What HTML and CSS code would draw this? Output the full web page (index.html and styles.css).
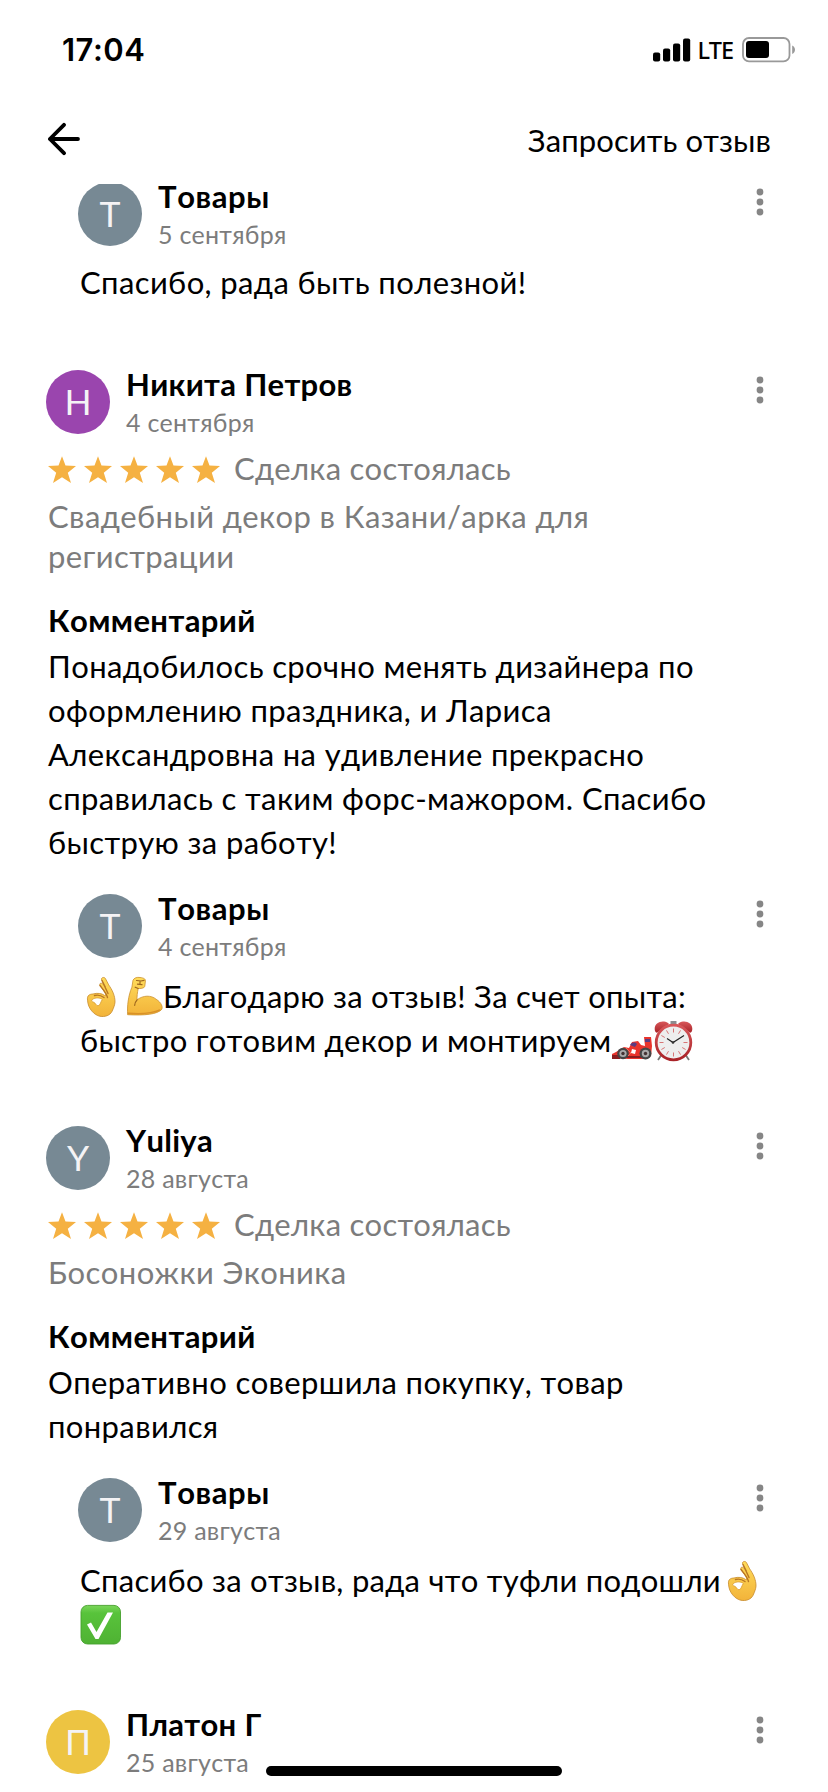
FILE: index.html
```html
<!DOCTYPE html>
<html lang="ru">
<head>
<meta charset="utf-8">
<title>Отзывы</title>
<link rel="stylesheet" href="styles.css">
</head>
<body>
<svg class="defs" width="0" height="0">
  <defs>
    <linearGradient id="skin" x1="0" y1="0" x2="0" y2="1"><stop offset="0" stop-color="#ffdc5a"/><stop offset="1" stop-color="#f2b33a"/></linearGradient>
    <linearGradient id="green" x1="0" y1="0" x2="0" y2="1"><stop offset="0" stop-color="#7ad65a"/><stop offset=".2" stop-color="#58c33b"/><stop offset="1" stop-color="#4fb233"/></linearGradient>
    <linearGradient id="red" x1="0" y1="0" x2="0" y2="1"><stop offset="0" stop-color="#d8575a"/><stop offset="1" stop-color="#a92328"/></linearGradient>
    <symbol id="dots" viewBox="0 0 8 28"><g fill="#868686"><circle cx="4" cy="4" r="3.4"/><circle cx="4" cy="14" r="3.4"/><circle cx="4" cy="24" r="3.4"/></g></symbol>
    <symbol id="star" viewBox="0 0 28 28"><path fill="#f5b142" d="M14 .3 17.500 9.600 28 10 19.800 16.800 23 27 14 21.300 5 27 8.200 16.800 0 10 10.500 9.600Z"/></symbol>
    <symbol id="ok" viewBox="0 0 41 42">
      <path d="M21.500 3.500c-.6-2 3-3 4-.8l3.200 6.200c3.500 5 6.500 11 6.300 17.300-.3 3-1.300 5.500-3 9.200-2 4-7 5.800-12 4.900-6-1.200-12-8-12.400-15.500-1-6 2.400-6.600 5.400-6.800 4-1.300 9-.6 11.500 1.400l1.600-.2c-1-3.200-3.700-6.200-5.800-9-1.500-2.400.4-4 2.500-2.300l2.600 2.700Z" fill="url(#skin)" stroke="#c7892a" stroke-width=".8"/>
      <path d="M20 9.500c2.200 3 6.500 7.500 7.500 12M22 4.500l6 13M14.500 19.500c3-.8 6.500-.2 9.500 2" fill="none" stroke="#b87523" stroke-width="1.400" stroke-linecap="round"/>
      <path d="M12.500 23.400c2.500-2 8-2 9.800.2-1.600 2-1.800 5.400-4.200 6.200-1.800.2-2-2.300-4.300-3.500-2-.7-2.800-1.500-1.300-2.900Z" fill="#fff" stroke="#d79a30" stroke-width=".8"/>
    </symbol>
    <symbol id="arm" viewBox="0 0 41 42">
      <path d="M11 4.200C12 2 15 .9 18 1.500c3.400.3 5.700 1.400 5.400 3.500l-.6 5.300c-.5 2.300-5 2.300-6.600 2.200-.8 4.200-1.400 8-1.100 11.300 6-4.600 14-4.800 19-.6 5.500 3.400 6.900 8 5.600 10.200-4.500 5-17 6.200-34.100 5.300-.5-8.400.6-19 4.300-27.500Z" fill="url(#skin)" stroke="#cc912d" stroke-width=".8"/>
      <path d="M14.500 4.500 19 5l3-.7M15.500 8.200l4.500.5M18 5v3M15.100 23.800c-1.700 1.700-2.300 3.500-2.400 5.500M16.200 12.500l-3-1.300" fill="none" stroke="#9d651d" stroke-width="1.200" stroke-linecap="round"/>
      <path d="M6 37.200c12 1 25-.1 32-3.300" fill="none" stroke="#d99127" stroke-width="1.500"/>
    </symbol>
    <symbol id="car" viewBox="0 0 41 42">
      <path d="M1 38v-4l4-2 8-5 5 1 3-6 6-1 3 4 4 1-1-9h7l1 9-1 10-5 3H17Z" fill="#e9342c"/>
      <path d="M1 35h8v4H1ZM16 36h18v2H16Z" fill="#8b1d20"/>
      <path d="M19 25c2-3 5-3 7-1l-2 3ZM34 19h5v3h-5Z" fill="#5b3c80"/>
      <path d="m21 29 4 1-1 4-4-1Z" fill="#fff"/>
      <circle cx="12" cy="33.500" r="5.800" fill="#454545"/><circle cx="12" cy="33.500" r="3.600" fill="#aaa"/><circle cx="12" cy="33.500" r="1.700" fill="#433"/>
      <circle cx="34.500" cy="33.500" r="6" fill="#454545"/><circle cx="34.500" cy="33.500" r="3.700" fill="#aaa"/><circle cx="34.500" cy="33.500" r="1.700" fill="#433"/>
      <path d="m15 28 5 5-3 3" fill="none" stroke="#f36a59"/>
    </symbol>
    <symbol id="clock" viewBox="0 0 41 42">
      <path d="m9 34-4 6M32 34l4 6" stroke="#777" stroke-width="1.800"/>
      <path d="M17.500 1h6v4h-6Z" fill="#8b8d90"/>
      <path d="M2 11C0 4 8-1 15 3c2 1 0 2-2 3L5 12c-1 1-2 1-3-1ZM39 11c2-7-6-12-13-8-2 1 0 2 2 3l8 6c1 1 2 1 3-1Z" fill="url(#red)"/>
      <circle cx="20.500" cy="22.500" r="17.300" fill="#eee" stroke="url(#red)" stroke-width="2.800"/>
      <g stroke="#d87575" stroke-width="1"><path d="M20.500 8.500v4M20.500 32.500v4M6.500 22.500h4M30.500 22.500h4M13.500 10.400l2 3.400M25.500 31.200l2 3.400M27.500 10.400l-2 3.400M15.500 31.200l-2 3.400M8.400 15.500l3.400 2M29.200 27.500l3.400 2M8.400 29.500l3.400-2"/></g>
      <path d="m14 18.500 6 4L31 15.500" fill="none" stroke="#222" stroke-width="1.200"/><circle cx="20" cy="22.500" r="1.300" fill="#333"/>
    </symbol>
    <symbol id="check" viewBox="0 0 41 42">
      <rect x="1" y="1.400" width="39.500" height="38.600" rx="6.500" fill="url(#green)" stroke="#46a02e" stroke-width=".9"/>
      <path d="M7 20.500 11 18.500 16.500 28 27.500 8.500h5.500L18.500 35h-3Z" fill="#fff"/>
    </symbol>
  </defs>
</svg>

<div class="screen">
  <div class="status">
    <span class="time">17:04</span>
    <div class="indicators">
      <svg width="38" height="24" viewBox="0 0 38 24"><rect x="0" y="14.500" width="7.200" height="9" rx="2"/><rect x="10" y="10.500" width="7.200" height="13" rx="2"/><rect x="20" y="5.500" width="7.200" height="18" rx="2"/><rect x="30" y=".5" width="7.200" height="23" rx="2"/></svg>
      <span class="lte">LTE</span>
      <svg class="battery" width="54" height="26" viewBox="0 0 54 26"><rect x="1" y="1" width="46.500" height="23.400" rx="6" fill="none" stroke="#999" stroke-width="1.800"/><rect x="4" y="4" width="23" height="17" rx="3"/><path d="M50.200 8.500c3.700 1.500 3.700 7 0 8.500Z" fill="#999"/></svg>
    </div>
  </div>
  <header class="bar">
    <svg width="34" height="34" viewBox="0 0 34 34"><path d="M30 17H2M16 2.800 1.900 17 16 31.200" fill="none" stroke="#000" stroke-width="3.800" stroke-linecap="round" stroke-linejoin="round"/></svg>
    <span class="action">Запросить отзыв</span>
  </header>

  <main class="list">
    <section class="reply first">
      <div class="person"><div class="avatar">Т</div><div class="who"><div class="name">Товары</div><div class="date">5 сентября</div></div><svg class="more"><use href="#dots"/></svg></div>
      <p class="text">Спасибо, рада быть полезной!</p>
    </section>

    <section class="review">
      <div class="person"><div class="avatar purple">Н</div><div class="who"><div class="name">Никита Петров</div><div class="date">4 сентября</div></div><svg class="more"><use href="#dots"/></svg></div>
      <div class="rating"><svg><use href="#star"/></svg><svg><use href="#star"/></svg><svg><use href="#star"/></svg><svg><use href="#star"/></svg><svg><use href="#star"/></svg><span>Сделка состоялась</span></div>
      <p class="item">Свадебный декор в Казани/арка для регистрации</p>
      <h3 class="label">Комментарий</h3>
      <p class="text">Понадобилось срочно менять дизайнера по оформлению праздника, и Лариса Александровна на удивление прекрасно справилась с таким форс-мажором. Спасибо быструю за работу!</p>
    </section>

    <section class="reply emoji-reply">
      <div class="person"><div class="avatar">Т</div><div class="who"><div class="name">Товары</div><div class="date">4 сентября</div></div><svg class="more"><use href="#dots"/></svg></div>
      <p class="text"><svg class="emoji"><use href="#ok"/></svg><svg class="emoji"><use href="#arm"/></svg>Благодарю за отзыв! За счет опыта: быстро готовим декор и монтируем<svg class="emoji"><use href="#car"/></svg><svg class="emoji"><use href="#clock"/></svg></p>
    </section>

    <section class="review">
      <div class="person"><div class="avatar">Y</div><div class="who"><div class="name">Yuliya</div><div class="date">28 августа</div></div><svg class="more"><use href="#dots"/></svg></div>
      <div class="rating"><svg><use href="#star"/></svg><svg><use href="#star"/></svg><svg><use href="#star"/></svg><svg><use href="#star"/></svg><svg><use href="#star"/></svg><span>Сделка состоялась</span></div>
      <p class="item">Босоножки Эконика</p>
      <h3 class="label">Комментарий</h3>
      <p class="text">Оперативно совершила покупку, товар понравился</p>
    </section>

    <section class="reply emoji-reply">
      <div class="person"><div class="avatar">Т</div><div class="who"><div class="name">Товары</div><div class="date">29 августа</div></div><svg class="more"><use href="#dots"/></svg></div>
      <p class="text">Спасибо за отзыв, рада что туфли подошли<svg class="emoji"><use href="#ok"/></svg><svg class="emoji"><use href="#check"/></svg></p>
    </section>

    <section class="review">
      <div class="person"><div class="avatar yellow">П</div><div class="who"><div class="name">Платон Г</div><div class="date">25 августа</div></div><svg class="more"><use href="#dots"/></svg></div>
    </section>
  </main>
  <div class="home"></div>
</div>
</body>
</html>
```
FILE: styles.css
```css
* { box-sizing: border-box; }
body { margin: 0; background: #fff; color: #000; font-family: Lato, "Noto Sans", sans-serif; font-kerning: none; }
p, h3 { margin: 0; }
svg { display: block; flex: none; }
.defs { position: absolute; }
.screen { position: relative; width: 828px; height: 1792px; overflow: hidden; display: flex; flex-direction: column; }

.status { height: 100px; flex: none; padding: 0 32px 0 62px; display: flex; justify-content: space-between; align-items: center; }
.time { font: 600 31px/40px Inter, sans-serif; letter-spacing: .5px; font-kerning: normal; }
.indicators { display: flex; align-items: center; }
.lte { font: 500 23.500px/28px "Noto Sans", sans-serif; letter-spacing: -1px; margin: 0 9px 0 7px; }

.bar { height: 84px; flex: none; padding: 0 57px 0 48px; display: flex; justify-content: space-between; align-items: flex-start; }
.bar svg { margin-top: 22px; }
.action { font-size: 31px; line-height: 40px; margin-top: 20px; letter-spacing: .1px; }

.list { flex: 1; overflow: hidden; }
.reply { padding: 0 58px 0 78px; margin-bottom: 64px; }
.reply.first { margin-top: -2px; margin-bottom: 66px; }
.review { padding: 0 58px 0 46px; margin-bottom: 30px; }

.person { display: flex; height: 64px; }
.avatar { width: 64px; height: 64px; flex: none; border-radius: 50%; background: #778994; color: #f4f3f5; font-size: 35.500px; line-height: 63px; text-align: center; }
.purple { background: #9a45ae; }
.yellow { background: #edc442; }
.who { flex: 1; margin-left: 16px; }
.name { font-size: 31px; font-weight: 700; line-height: 28px; letter-spacing: .3px; white-space: nowrap; }
.reply .name { letter-spacing: .6px; }
.date { font-size: 25px; line-height: 32px; margin-top: 8px; color: #7c7c7c; letter-spacing: .25px; white-space: nowrap; }
.more { width: 8px; height: 28px; margin: 6px 6px 0 0; }

.text { font-size: 31px; line-height: 44px; letter-spacing: .38px; padding-left: 2px; }
.reply .text { margin-top: 16px; }
.emoji-reply .text { letter-spacing: .27px; }
.reply.first .text { margin-top: 14px; }
.review .text { margin-top: 4px; }
.emoji { display: inline-block; width: 41px; height: 42px; margin: -4px .5px -4px 0; vertical-align: -6px; }

.rating { display: flex; height: 40px; margin-top: 14px; padding-left: 2px; gap: 8px; align-items: center; color: #7c7c7c; font-size: 31px; line-height: 40px; letter-spacing: .25px; white-space: nowrap; }
.rating svg { width: 28px; height: 28px; margin-top: 4px; }
.rating span { margin-left: 6px; }
.item { font-size: 31px; line-height: 40px; margin-top: 8px; padding-left: 2px; color: #7c7c7c; letter-spacing: .4px; max-width: 600px; }
.label { font-size: 31px; font-weight: 700; line-height: 40px; margin-top: 24px; padding-left: 2px; letter-spacing: .4px; }

.home { position: absolute; left: 266px; top: 1766px; width: 296px; height: 10px; border-radius: 5px; background: #000; }
```
